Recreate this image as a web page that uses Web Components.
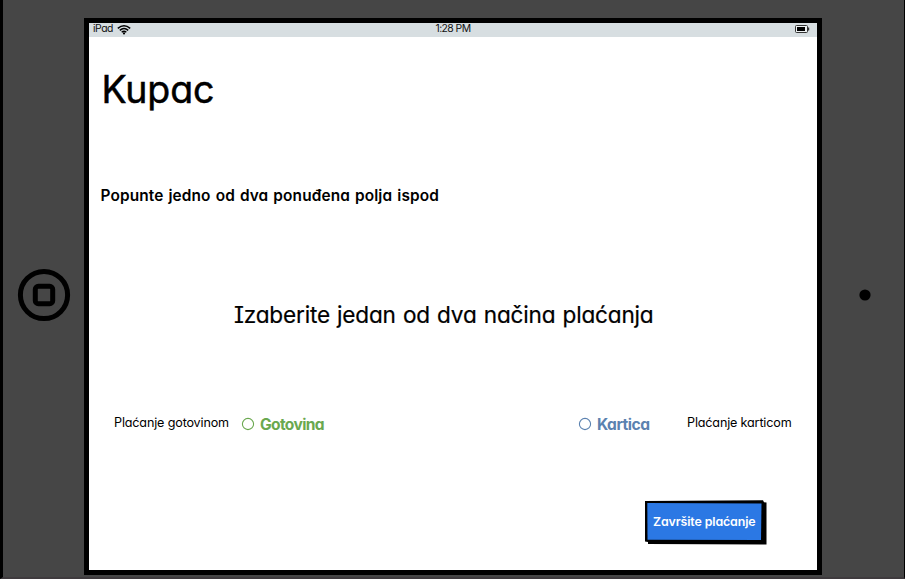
<!DOCTYPE html>
<html lang="sr"><head><meta charset="utf-8"><title>Kupac</title>
<style>html,body{margin:0;width:905px;height:579px;overflow:hidden;background:#464646}body{font-family:Inter,"Noto Sans",sans-serif;font-feature-settings:"cv11","cv08";color:#000}</style></head><body>
<tablet-frame>
<status-bar></status-bar>
<payment-page></payment-page>
</tablet-frame>
<script>
const define=(name,markup,setup)=>customElements.define(name,class extends HTMLElement{
  constructor(){super();this.attachShadow({mode:'open'}).innerHTML=markup;}
  connectedCallback(){if(setup)setup(this);}
});
/* Text line whose tracking is adjusted to the "fit" width in pixels. */
define('fit-text','<style>:host{display:block;white-space:nowrap;flex:none}span{display:inline-block}</style><span><slot></slot></span>',el=>{
  const span=el.shadowRoot.querySelector('span'),n=el.textContent.length;
  el.style.width=el.getAttribute('fit')+'px';
  const w=span.getBoundingClientRect().width;
  span.style.letterSpacing=((+el.getAttribute('fit')-w)/n)+'px';
});
define('status-bar',`<style>:host{display:grid;grid-template-columns:1fr auto 1fr;align-items:center;height:14px;background:#d7dee1;font-size:10.4px;line-height:12px;color:#111}
.l{display:flex;align-items:center;gap:4px;padding-left:4px}.r{display:flex;justify-content:flex-end;padding-right:7px}svg{display:block}.l svg{margin-top:-2px}.r svg{margin-top:-2px}fit-text{position:relative;top:-1px}</style>
<div class="l"><fit-text fit="20">iPad</fit-text><svg width="14" height="11" viewBox="0 0 14 11"><g fill="none" stroke="#000" stroke-width="1.5"><path d="M.8 4.4Q7-1 13.2 4.4M2.8 6.4Q7 2.6 11.2 6.4M4.7 8.3Q7 6.2 9.3 8.3"/></g><circle cx="7" cy="9.4" r="1.1"/></svg></div>
<fit-text fit="35">1:28 PM</fit-text>
<div class="r"><svg width="15" height="8" viewBox="0 0 15 8"><rect x=".5" y=".5" width="12" height="7" rx="1" fill="#edf1f2" stroke="#333"/><rect x="2" y="2" width="8" height="4"/><path d="M13.5 2.5V5.5" stroke="#333" stroke-width="1.4"/></svg></div>`);
define('pay-option',`<style>:host{display:flex;align-items:center;gap:5px;font-size:15.6px;line-height:20px;font-weight:700}svg{display:block;flex:none}::slotted(*){padding-top:2px}</style><svg width="14" height="14"><circle cx="7" cy="7" r="5.6" fill="#fff" stroke="currentColor" stroke-width="1.1"/></svg><slot></slot>`);
define('sketch-button',`<style>:host{display:grid;width:123px;height:45px;color:#fff;font-size:12.4px;line-height:18px;font-weight:600}svg,.t{grid-area:1/1}.t{padding:13px 0 0 9px}</style>
<svg width="123" height="45" viewBox="0 0 123 45"><path d="M1 1L119 .3L120 2.2L122.5 2.5V44.5L4 44V42L1 41.5Z"/><path d="M3.3 3L117.5 3.4L117 40L3.5 39.8Z" fill="#2b78e4"/></svg><div class="t"><slot></slot></div>`);
define('payment-page',`<style>:host{display:flex;flex-direction:column;flex:1;background:#fff}
.title{font-size:37.5px;line-height:46px;padding:30px 0 0 12.4px;-webkit-text-stroke:.5px #000;stroke-linejoin:round}.lead{font-size:15.4px;font-weight:600;line-height:20px;padding:73px 0 0 11.5px;word-spacing:1px}
.prompt{font-size:22.6px;line-height:30px;padding:94px 0 0 145px;-webkit-text-stroke:.2px #000;word-spacing:1px}.options{display:flex;align-items:center;padding:84px 0 0 25px;height:20px}
.small{font-size:12.6px;line-height:18px;margin-top:-3px}.cash{color:#6aa84f;margin-left:12px}.card{color:#5b82b0;margin-left:254px}.end{margin-left:37.5px}
.action{display:flex;justify-content:flex-end;padding:66px 50px 0 0}</style>
<div class="title"><fit-text fit="113">Kupac</fit-text></div>
<div class="lead"><fit-text fit="338.5">Popunte jedno od dva ponuđena polja ispod</fit-text></div>
<div class="prompt"><fit-text fit="419.5">Izaberite jedan od dva načina plaćanja</fit-text></div>
<div class="options"><fit-text class="small" fit="115">Plaćanje gotovinom</fit-text><pay-option class="cash"><fit-text fit="64">Gotovina</fit-text></pay-option><pay-option class="card"><fit-text fit="52.5">Kartica</fit-text></pay-option><fit-text class="small end" fit="104.5">Plaćanje karticom</fit-text></div>
<div class="action"><sketch-button><fit-text fit="102.5">Završite plaćanje</fit-text></sketch-button></div>`);
define('tablet-frame',`<style>:host{display:grid;grid-template-columns:81px 738px 82px;width:901px;height:577px;background:#464646;border-left:3px solid #000;border-right:1px solid #000;border-bottom:2px solid #3f3b3e}
.side{display:flex;align-items:center;padding-top:13px;box-sizing:border-box}.home{padding-left:14px}.camera{justify-content:center;padding-left:4px}
.screen{display:flex;flex-direction:column;box-sizing:border-box;margin-top:18px;height:557px;border:5px solid #000}svg{display:block}</style>
<div class="side home"><svg width="54" height="54" viewBox="0 0 54 54"><g fill="none" stroke="#000" stroke-width="5"><circle cx="27" cy="27" r="23.6"/><rect x="18.3" y="18.3" width="17.4" height="17.4" rx="3"/></g></svg></div>
<div class="screen"><slot></slot></div>
<div class="side camera"><svg width="12" height="12"><circle cx="6" cy="6" r="5.6"/></svg></div>`);
</script></body></html>
